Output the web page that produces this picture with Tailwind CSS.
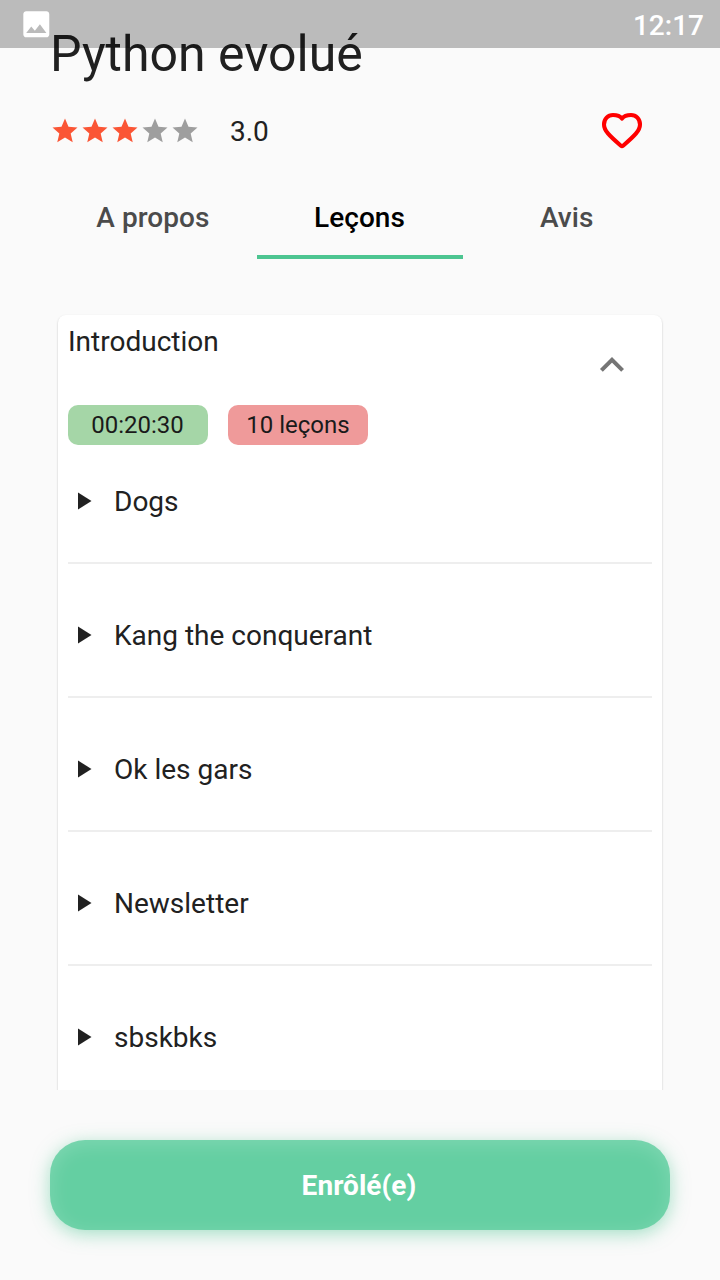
<!DOCTYPE html>
<html lang="fr"><head><meta charset="utf-8"><title>Python evolué</title>
<script src="https://cdn.jsdelivr.net/npm/@tailwindcss/browser@4"></script></head>
<body class="bg-[#fafafa] text-[#212121] font-['Roboto',sans-serif] overflow-hidden">
<div class="relative flex h-[1280px] w-[720px] flex-col overflow-hidden">
<header class="absolute inset-x-0 top-0 z-10 flex h-12 items-center justify-between bg-black/25 pl-[18.500px] pr-4">
<svg class="size-[34.600px]" viewBox="0 0 24 24" fill="#fff"><path d="M21 19V5c0-1.100-.9-2-2-2H5c-1.100 0-2 .9-2 2v14c0 1.100.9 2 2 2h14c1.100 0 2-.9 2-2zM8.500 13.500l2.500 3.010L14.500 12l4.500 6H5l3.500-4.500z"/></svg>
<span class="pt-[3px] text-[28px] leading-8 font-medium text-white">12:17</span>
</header>
<h1 class="mt-6 ml-[50px] h-[60px] text-[50px] leading-[60px] whitespace-nowrap">Python evolué</h1>
<div class="mt-[17px] ml-[50px] flex h-[60px] w-[620px] items-center">
<div class="flex gap-[0.100px]">
<svg class="size-[30px]" viewBox="0 0 24 24" fill="#fa5535"><path d="M12 17.270 18.180 21l-1.640-7.030L22 9.240l-7.190-.61L12 2 9.190 8.630 2 9.240l5.460 4.730L5.820 21z"/></svg>
<svg class="size-[30px]" viewBox="0 0 24 24" fill="#fa5535"><path d="M12 17.270 18.180 21l-1.640-7.030L22 9.240l-7.190-.61L12 2 9.190 8.630 2 9.240l5.460 4.730L5.820 21z"/></svg>
<svg class="size-[30px]" viewBox="0 0 24 24" fill="#fa5535"><path d="M12 17.270 18.180 21l-1.640-7.030L22 9.240l-7.190-.61L12 2 9.190 8.630 2 9.240l5.460 4.730L5.820 21z"/></svg>
<svg class="size-[30px]" viewBox="0 0 24 24" fill="#9e9e9e"><path d="M12 17.270 18.180 21l-1.640-7.030L22 9.240l-7.190-.61L12 2 9.190 8.630 2 9.240l5.460 4.730L5.820 21z"/></svg>
<svg class="size-[30px]" viewBox="0 0 24 24" fill="#9e9e9e"><path d="M12 17.270 18.180 21l-1.640-7.030L22 9.240l-7.190-.61L12 2 9.190 8.630 2 9.240l5.460 4.730L5.820 21z"/></svg>
</div>
<span class="ml-[29.600px] pt-[2px] text-[28px]">3.0</span>
<svg class="ml-auto mr-6 size-12" viewBox="0 0 24 24" fill="none" stroke="#f00" stroke-width="2.050" stroke-linecap="round" stroke-linejoin="round"><path d="M12 5.800C11.200 4.700 9.500 4 7.500 4 5 4 3 6 3 8.700c0 3.100 2.700 5.700 8.450 10.650q.55.450 1.100 0C18.300 14.400 21 11.800 21 8.700 21 6 19 4 16.500 4 14.500 4 12.800 4.700 12 5.800z"/></svg>
</div>
<nav class="mx-[50px] mt-[10px] grid h-[88px] grid-cols-3 text-center text-[28px] leading-[93px] font-medium tracking-[0.050px] text-[#4b4b4b]">
<span class="pr-px">A propos</span><span class="h-[88px] border-b-4 border-[#4dc591] pr-px text-black">Leçons</span><span>Avis</span>
</nav>
<main class="mt-[46px] h-[785px] overflow-hidden px-[58px] pt-[10px]">
<section class="h-[900px] rounded-[8px] bg-white px-[10px] shadow-[0_1px_2px_rgba(0,0,0,0.25)]">
<div class="flex h-[90px] justify-between"><h2 class="pt-[11px] text-[28px] leading-8">Introduction</h2>
<svg class="mt-[26px] mr-4 size-12" viewBox="0 0 24 24" fill="none" stroke="#757575" stroke-width="2" stroke-linejoin="miter"><path d="M6.700 14.700L12 9.400l5.300 5.300"/></svg></div>
<div class="flex gap-5 text-center text-[24px] leading-10 text-[#1a1a1a]"><span class="h-10 w-[140px] rounded-[10px] bg-[#a5d6a7] pr-px">00:20:30</span><span class="h-10 w-[140px] rounded-[10px] bg-[#ef9a9a]">10 leçons</span></div>
<ul class="-mt-[15px] text-[28px]">
<li class="flex h-[134px] items-center gap-[22px] border-b-2 border-[#eee] pt-[12px] pl-[10px]"><svg class="h-[18px] w-[14px] overflow-visible" viewBox="0 0.700 14 18" fill="#212121"><path d="M0 0.200v17l13.500-8.500z"/></svg><span>Dogs</span></li>
<li class="flex h-[134px] items-center gap-[22px] border-b-2 border-[#eee] pt-[12px] pl-[10px]"><svg class="h-[18px] w-[14px] overflow-visible" viewBox="0 0.700 14 18" fill="#212121"><path d="M0 0.200v17l13.500-8.500z"/></svg><span>Kang the conquerant</span></li>
<li class="flex h-[134px] items-center gap-[22px] border-b-2 border-[#eee] pt-[12px] pl-[10px]"><svg class="h-[18px] w-[14px] overflow-visible" viewBox="0 0.700 14 18" fill="#212121"><path d="M0 0.200v17l13.500-8.500z"/></svg><span>Ok les gars</span></li>
<li class="flex h-[134px] items-center gap-[22px] border-b-2 border-[#eee] pt-[12px] pl-[10px]"><svg class="h-[18px] w-[14px] overflow-visible" viewBox="0 0.700 14 18" fill="#212121"><path d="M0 0.200v17l13.500-8.500z"/></svg><span>Newsletter</span></li>
<li class="flex h-[134px] items-center gap-[22px] border-b-2 border-[#eee] pt-[12px] pl-[10px]"><svg class="h-[18px] w-[14px] overflow-visible" viewBox="0 0.700 14 18" fill="#212121"><path d="M0 0.200v17l13.500-8.500z"/></svg><span>sbskbks</span></li>
</ul></section></main>
<button class="mx-[50px] mt-[50px] h-[90px] rounded-[35px] bg-[#64cfa2] pt-[2px] pr-[2px] text-[28px] font-bold tracking-[0.050px] text-white shadow-[0_4px_18px_rgba(77,197,145,0.5),inset_0_4px_20px_rgba(255,255,255,0.18)]">Enrôlé(e)</button>
</div></body></html>
